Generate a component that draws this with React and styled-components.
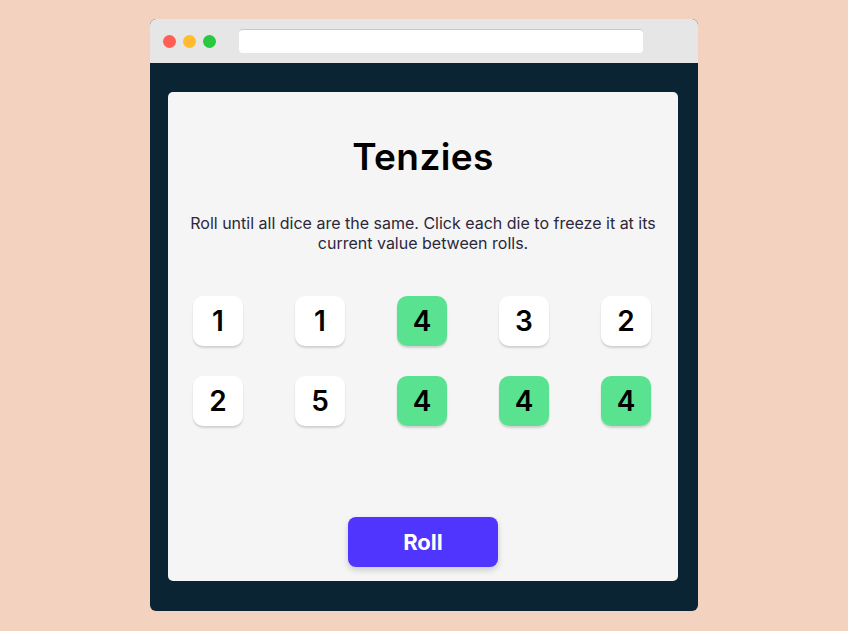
import React from "react";
import styled, { createGlobalStyle } from "styled-components";

const Global = createGlobalStyle`
  html, body { margin: 0; padding: 0; }
  body { background: #F3D2BF; font-family: Inter, "Liberation Sans", sans-serif; }
`;

const Page = styled.div`
  display: flex;
  justify-content: center;
  padding-top: 19px;
  height: 631px;
  box-sizing: border-box;
`;

const Window = styled.div`
  width: 548px;
  height: 592px;
  border-radius: 6px;
  overflow: hidden;
  display: flex;
  flex-direction: column;
  background: #0B2434;
`;

const TitleBar = styled.div`
  height: 44px;
  background: #E6E6E6;
  display: flex;
  align-items: center;
  padding-left: 13px;
  gap: 7px;
  flex-shrink: 0;
`;

const Dot = styled.span`
  width: 13px;
  height: 13px;
  border-radius: 50%;
  background: ${(p) => p.$c};
`;

const Address = styled.div`
  margin-left: 16px;
  width: 404px;
  height: 24px;
  background: #fff;
  border-radius: 4px;
  border-top: 1px solid #c8c8c8;
  box-sizing: border-box;
`;

const Body = styled.div`
  flex: 1;
  padding: 29px 20px 30px 18px;
  display: flex;
`;

const Card = styled.main`
  flex: 1;
  background: #F5F5F5;
  border-radius: 5px;
  display: flex;
  flex-direction: column;
  align-items: center;
  padding: 0 16px 14px;
`;

const Title = styled.h1`
  margin: 43px 0 0;
  font-size: 37px;
  line-height: 44px;
  font-weight: 600;
  color: #000;
  letter-spacing: 0.4px;
`;

const Text = styled.p`
  margin: 34px 0 0;
  font-size: 16px;
  line-height: 20px;
  color: #2B283A;
  text-align: center;
  max-width: 478px;
`;

const Grid = styled.div`
  margin-top: 43px;
  margin-right: 2px;
  display: grid;
  grid-template-columns: repeat(5, 50px);
  column-gap: 52px;
  row-gap: 30px;
`;

const Die = styled.button`
  width: 50px;
  height: 50px;
  border: none;
  border-radius: 10px;
  background: ${(p) => (p.$held ? "#59E391" : "#FFFFFF")};
  box-shadow: 0 2px 2px rgba(0, 0, 0, 0.15);
  font-family: Inter, "Liberation Sans", sans-serif;
  font-size: 28px;
  font-weight: 600;
  color: #000;
  display: flex;
  align-items: center;
  justify-content: center;
  padding: 0;
  cursor: pointer;
`;

const Roll = styled.button`
  margin-top: auto;
  width: 150px;
  height: 50px;
  border: none;
  border-radius: 8px;
  background: #5035FF;
  color: #fff;
  font-family: Inter, "Liberation Sans", sans-serif;
  font-size: 22px;
  font-weight: 700;
  box-shadow: 0 3px 6px rgba(0, 0, 0, 0.18);
  cursor: pointer;
`;

const dice = [
  { v: 1, h: false }, { v: 1, h: false }, { v: 4, h: true }, { v: 3, h: false }, { v: 2, h: false },
  { v: 2, h: false }, { v: 5, h: false }, { v: 4, h: true }, { v: 4, h: true }, { v: 4, h: true },
];

export default function App() {
  return (
    <>
      <Global />
      <Page>
        <Window>
          <TitleBar>
            <Dot $c="#FF5F57" />
            <Dot $c="#FEBC2E" />
            <Dot $c="#28C840" />
            <Address />
          </TitleBar>
          <Body>
            <Card>
              <Title>Tenzies</Title>
              <Text>
                Roll until all dice are the same. Click each die to freeze it at its current value between rolls.
              </Text>
              <Grid>
                {dice.map((d, i) => (
                  <Die key={i} $held={d.h}>{d.v}</Die>
                ))}
              </Grid>
              <Roll>Roll</Roll>
            </Card>
          </Body>
        </Window>
      </Page>
    </>
  );
}
